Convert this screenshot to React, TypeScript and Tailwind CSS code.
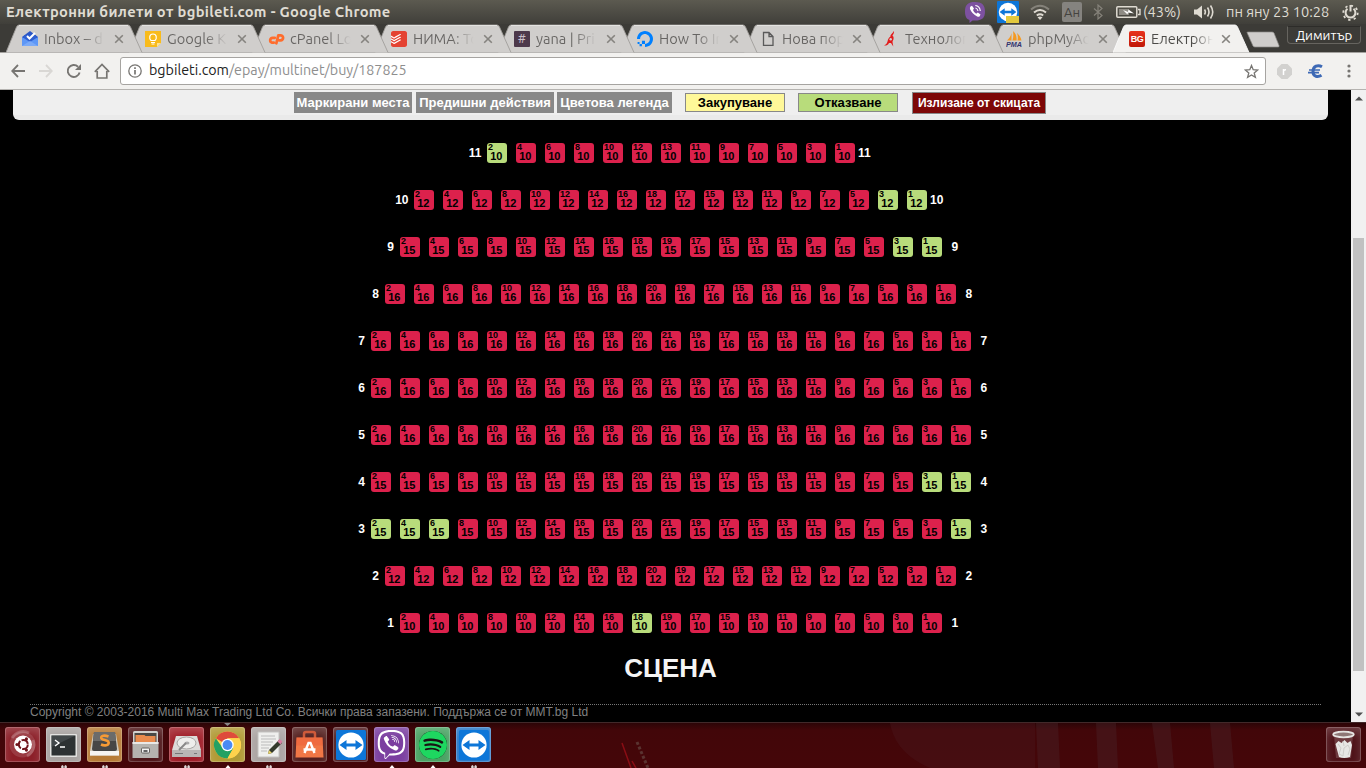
import React from "react";
import { SiTodoist, SiDigitalocean, SiViber, SiSpotify } from "react-icons/si";

const UI = "font-['Ubuntu','Open_Sans',sans-serif]";
const SANS = "font-['Liberation_Sans',Arial,sans-serif]";

/* ---------- seat map ---------- */

type Row = { n: number; count: number; price: number; pad: string; free: number[] };

const rows: Row[] = [
  { n: 11, count: 13, price: 10, pad: "pl-[457px]", free: [2] },
  { n: 10, count: 18, price: 12, pad: "pl-[384px]", free: [3, 1] },
  { n: 9, count: 19, price: 15, pad: "pl-[370px]", free: [3, 1] },
  { n: 8, count: 20, price: 16, pad: "pl-[355px]", free: [] },
  { n: 7, count: 21, price: 16, pad: "pl-[341px]", free: [] },
  { n: 6, count: 21, price: 16, pad: "pl-[341px]", free: [] },
  { n: 5, count: 21, price: 16, pad: "pl-[341px]", free: [] },
  { n: 4, count: 21, price: 15, pad: "pl-[341px]", free: [3, 1] },
  { n: 3, count: 21, price: 15, pad: "pl-[341px]", free: [2, 4, 6, 1] },
  { n: 2, count: 20, price: 12, pad: "pl-[355px]", free: [] },
  { n: 1, count: 19, price: 10, pad: "pl-[370px]", free: [18] },
];

function seatNumbers(count: number) {
  const evens: number[] = [];
  const odds: number[] = [];
  for (let i = 1; i <= count; i++) (i % 2 ? odds : evens).push(i);
  return [...evens, ...odds.reverse()];
}

function Seat({ n, price, free }: { n: number; price: number; free: boolean }) {
  return (
    <div
      className={`h-5 w-5 shrink-0 overflow-hidden rounded-[3px] font-bold text-black ${free ? "bg-[#b8dc7b]" : "bg-[#dc214c]"}`}
    >
      <div className="h-[9px] pl-px text-[9px] leading-[9px]">{n}</div>
      <div className="pr-[1.5px] text-center text-[11px] leading-[9px]">{price}</div>
    </div>
  );
}

function SeatRow({ row }: { row: Row }) {
  const wide = row.n > 9;
  return (
    <div className={`flex h-5 items-center text-[12px] font-bold text-white ${row.pad}`}>
      <div className={`w-[30px] text-right leading-5 ${wide ? "pr-[5.5px]" : "pr-[6px]"}`}>{row.n}</div>
      <div className="flex gap-[9px]">
        {seatNumbers(row.count).map((n) => (
          <Seat key={n} n={n} price={row.price} free={row.free.includes(n)} />
        ))}
      </div>
      <div className={`leading-5 ${wide ? "pl-[3px]" : "pl-[9.5px]"}`}>{row.n}</div>
    </div>
  );
}

/* ---------- tab icons ---------- */

const InboxIcon = () => (
  <svg width="16" height="16" viewBox="0 0 16 16">
    <path d="M0 6 8 0l8 6v4H0z" fill="#2a56c6" />
    <path d="M2 4h12v7H2z" fill="#2f5fd0" />
    <path d="M0 6l8 5 8-5v9H0z" fill="#5e97f6" />
    <path d="M0 15 8 10l8 5z" fill="#7baaf7" />
    <path d="m5 5 2.500 2.500L13 2" fill="none" stroke="#fff" strokeWidth="2" />
  </svg>
);
const KeepIcon = () => (
  <svg width="16" height="16" viewBox="0 0 16 16">
    <path d="M0 0h16v12l-4 4H0z" fill="#f9bb1b" />
    <path d="M16 12h-4v4z" fill="#fde293" />
    <path d="M6 9.500C4 8 4 3 8 3s4 5 2 6.500z" fill="none" stroke="#fff" strokeWidth="1.200" />
    <path d="M6 11.500h4M6.500 13h3" stroke="#fff" />
  </svg>
);
const CpanelIcon = () => (
  <svg width="17" height="16" viewBox="0 0 17 16" fill="none" stroke="#ff6c2c" strokeWidth="2.700" strokeLinecap="round" strokeLinejoin="round">
    <path d="M6.800 6.800H4.600a2.500 2.500 0 0 0-.6 4.900h1.800" />
    <path d="m8.300 12.300 2-8h2.200a2.500 2.500 0 0 1 .2 5h-1.800" />
  </svg>
);
const FileIcon = () => (
  <svg width="16" height="16" viewBox="0 0 16 16" fill="none" stroke="#5a5a5a" strokeWidth="1.300">
    <path d="M3.500 1.500h5.500l4 4v8.800h-9.500zM9 1.500v4h4" />
  </svg>
);
const FlameIcon = () => (
  <svg width="16" height="16" viewBox="0 0 16 16">
    <path d="M10.500 0c1.300 2-.6 3.200-1 5 1 .2 1.300 1.500 1 3-.2 1.300-1 2-1 3l.8 4.500-2.300-3.500H6C5 14 3 14.800 1 14.500c2-1 3-2 3.500-4C5 8.500 5.500 6.500 7.500 5.500 7 3.500 10 2.500 10.500 0z" fill="#e21b1b" />
    <circle cx="7.700" cy="8.300" r="1.200" fill="#d0cfcd" />
  </svg>
);
const PmaIcon = () => (
  <svg width="16" height="16" viewBox="0 0 16 16">
    <path d="M5.500 2v7.500H1C3 8 5 5 5.500 2zM7 0c3 2.500 4 6 3.500 9.500H6.500C7.500 6 7.500 3 7 0zM11 2c2.500 2 4 5 4.500 7.500h-4C12 7 12 4.500 11 2z" fill="#f59a23" />
    <text x="0" y="15.500" fontSize="6.500" fontWeight="bold" fontStyle="italic" fill="#34346e" textLength="16" lengthAdjust="spacingAndGlyphs" fontFamily="Liberation Sans">PMA</text>
  </svg>
);

const tabs: { title: string; icon: React.ReactNode }[] = [
  { title: "Inbox – d", icon: <InboxIcon /> },
  { title: "Google K", icon: <KeepIcon /> },
  { title: "cPanel Lo", icon: <CpanelIcon /> },
  { title: "НИМА: То", icon: <div className="h-4 w-4 rounded-[2px] bg-white"><SiTodoist size={16} color="#e44332" /></div> },
  { title: "yana | Pri", icon: <div className="h-4 w-4 rounded-[1px] bg-[#4d394b] text-center text-[12px] leading-4 text-[#c9bfc8]">#</div> },
  { title: "How To In", icon: <SiDigitalocean size={16} color="#0080ff" /> },
  { title: "Нова пор", icon: <FileIcon /> },
  { title: "Технолог", icon: <FlameIcon /> },
  { title: "phpMyAd", icon: <PmaIcon /> },
  { title: "Електрон", icon: <div className={`h-4 w-4 rounded-[2px] bg-gradient-to-b from-[#e8321c] to-[#c01808] text-center text-[9px] font-bold leading-4 tracking-[-0.5px] text-white ${SANS}`}>BG</div> },
];

function Tab({ title, icon, index }: { title: string; icon: React.ReactNode; index: number }) {
  const active = index === 9;
  return (
    <div className="relative flex h-[29px] w-[123px] shrink-0 items-center pl-[16px]" style={{ zIndex: active ? 20 : 10 - index }}>
      <svg className="absolute left-0 top-0" width="138" height="29" viewBox="0 0 138 29">
        <path d="M0 28.500 10.500 3Q11.500 1 13 1H122Q123.500 1 124.500 3L136 28.500z" fill={active ? "#f2f1ef" : "#d0cecc"} />
        <path d="M0 28.500 10.500 3Q11.500 1 13 1H122Q123.500 1 124.500 3L136 28.500" fill="none" stroke={active ? "#fafafa" : "#a09e9b"} strokeWidth=".9" />
        {!active && <path d="M13 1.500H122" stroke="#e4e3e1" />}
      </svg>
      <div className="relative flex h-4 w-[17px] items-center">{icon}</div>
      <div
        className={`relative ml-[5px] w-[62px] whitespace-nowrap bg-clip-text text-[14.6px] leading-5 text-transparent ${UI} ${
          active
            ? "bg-[linear-gradient(90deg,#4c4b48_68%,#f2f1ef_100%)]"
            : "bg-[linear-gradient(90deg,#666462_62%,#d0cecc_98%)]"
        }`}
      >
        {title}
      </div>
      <svg className="relative ml-[8px]" width="10" height="10" viewBox="0 0 10 10">
        <path d="m1.200 1.200 7.600 7.600m0-7.600L1.200 8.800" stroke="#85837f" strokeWidth="1.600" />
      </svg>
    </div>
  );
}

/* ---------- system tray ---------- */

function TeamViewer({ size }: { size: number }) {
  return (
    <svg width={size} height={size} viewBox="0 0 30 30">
      <rect width="30" height="30" rx="1.500" fill="#0d76d8" />
      <circle cx="15" cy="15" r="12.600" fill="#fff" />
      <path d="m3.500 15 7-5v3.400h9V10l7 5-7 5v-3.400h-9V20z" fill="#0d76d8" />
    </svg>
  );
}

function Tray() {
  return (
    <div className={`flex h-6 items-center text-[14.6px] text-[#dfdbd2] ${UI}`}>
      <svg width="20" height="21" viewBox="0 0 20 21">
        <path d="M10 0C3 0 0 2.500 0 9.500c0 5 1.500 7.500 4.500 8.500v3l3-2.500H10c7 0 10-2.500 10-9S17 0 10 0z" fill="#7d51a0" />
        <path d="M5.500 4.500 7 3.800l2 2.700-1 1.500q.8 2.500 3.200 3.700l1.600-1.200 2.700 2-.8 1.700q-1 1-2.500.3Q7 12 5 7q-.4-1.500.5-2.500z" fill="#fff" />
        <path d="M10.300 3.500q4.500.5 5 5.500M10.500 6q2 .5 2.500 3" fill="none" stroke="#fff" strokeWidth="1.100" />
      </svg>
      <div className="relative ml-[12px] h-[22px] w-[22px]">
        <TeamViewer size={22} />
        <div className="absolute bottom-0 right-0 h-[7px] w-[13px] bg-[#e3c93e]" />
      </div>
      <svg className="ml-[11px]" width="20" height="16" viewBox="0 0 20 16" fill="none" strokeWidth="2">
        <path d="M1 5.500Q10-2 19 5.500" stroke="#85827a" />
        <path d="M4 8.500Q10 3.500 16 8.500M6.800 11.500Q10 9 13.200 11.500" stroke="#dfdbd2" />
        <path d="m7.500 13.200 2.500 2.800 2.500-2.800Q10 12 7.500 13.200z" fill="#dfdbd2" stroke="none" />
      </svg>
      <div className="ml-[12px] h-5 w-5 rounded-[2px] bg-[#85837f] text-center text-[13px] leading-5 text-[#45433f]">Ан</div>
      <svg className="ml-[11px]" width="10" height="16" viewBox="0 0 10 16" fill="none" stroke="#85827a" strokeWidth="1.200">
        <path d="m1 4.500 8 7-4 3.500V1l4 3.500-8 7" />
      </svg>
      <svg className="ml-[13px]" width="25" height="12" viewBox="0 0 25 12">
        <rect x=".8" y=".8" width="20" height="10.400" rx="1" fill="none" stroke="#dfdbd2" strokeWidth="1.500" />
        <path d="M22 3.500h2v5h-2" fill="none" stroke="#dfdbd2" strokeWidth="1.400" />
        <path d="M3 3h10v6H3z" fill="#8e8b84" />
        <path d="m7 4 5 2 .5-2.500L18 7.500 12 6.500 11.500 8.500z" fill="#fff" />
      </svg>
      <div className="ml-[2px] w-[39px] whitespace-nowrap">(43%)</div>
      <svg className="ml-[12px]" width="21" height="16" viewBox="0 0 21 16" fill="none" stroke="#dfdbd2" strokeWidth="1.600">
        <path d="M0 5.500h3l5-4v13l-5-4H0z" fill="#dfdbd2" stroke="none" />
        <path d="M10.500 5.500q1.700 2.500 0 5M13.500 3.500q3 4.500 0 9M16.500 1.500q4.500 6.500 0 13" />
      </svg>
      <div className="ml-[11px] w-[104px] whitespace-nowrap">пн яну 23 10:28</div>
      <svg className="ml-[12px]" width="17" height="17" viewBox="0 0 17 17" fill="none" stroke="#dfdbd2">
        <path d="M5.500 4.800a4.900 4.900 0 1 0 6 0" strokeWidth="2" />
        <path d="M8.500 1v6.500" strokeWidth="2" />
        <circle cx="8.500" cy="8.800" r="7.200" strokeWidth="1.800" strokeDasharray="2.300 3.355" />
      </svg>
    </div>
  );
}

/* ---------- launcher icons ---------- */

const UbuntuLogo = () => (
  <svg width="35" height="35" viewBox="0 0 35 35">
    <circle cx="17.500" cy="17.500" r="13" fill="#fff" opacity=".12" />
    <path d="M7 11a13 13 0 0 1 17-5M28 13a13 13 0 0 1-6 16" stroke="#fff" opacity=".2" strokeWidth="3" fill="none" />
    <circle cx="18" cy="17.500" r="9" fill="#fff" />
    <circle cx="18.300" cy="17.500" r="4.500" fill="none" stroke="#70141c" strokeWidth="2" strokeDasharray="8.100 1.325" />
    <circle cx="12" cy="17.500" r="1.600" fill="#70141c" />
    <circle cx="21.400" cy="11.900" r="1.600" fill="#70141c" />
    <circle cx="21.400" cy="23.100" r="1.600" fill="#70141c" />
  </svg>
);
const Terminal = () => (
  <svg width="35" height="35" viewBox="0 0 35 35">
    <rect x="4" y="7" width="27" height="23" rx="1" fill="#e2e2e0" />
    <rect x="5.500" y="8.500" width="24" height="20" fill="#2d3233" />
    <path d="M5.500 8.500h24L5.500 20z" fill="#50575a" opacity=".6" />
    <path d="m9 13 4 3-4 3M14 20h5" fill="none" stroke="#fff" strokeWidth="1.400" />
  </svg>
);
const Sublime = () => (
  <svg width="35" height="35" viewBox="0 0 35 35">
    <path d="M6 7h23l3 17v4.500H3V24z" fill="#cfc8bb" />
    <path d="M3 24h29v4.500H3z" fill="#f6f4f1" />
    <path d="M7 5h21l2 17q0 2-2 2H7q-2 0-2-2z" fill="#464646" />
    <path d="M7 5h21l1 9H6z" fill="#6b6b6a" />
    <path d="M21.500 9.500c-4-1.500-7.500-1-7.200 1.500.4 2.500 7.400 1.700 7.400 4.700 0 2.500-4 3.500-7.700 1.800" fill="none" stroke="#f59a35" strokeWidth="2.600" />
  </svg>
);
const Drawer = () => (
  <svg width="35" height="35" viewBox="0 0 35 35">
    <rect x="5" y="4" width="25" height="27" rx="1.500" fill="#d2d0cd" />
    <rect x="6.500" y="6" width="22" height="9" fill="#4a4845" />
    <path d="M7.500 8h9l1 1h10v6h-20z" fill="#e98a4d" />
    <path d="M4.500 15h26v16h-26z" fill="#b5b3af" />
    <path d="M4.500 15h26v2h-26z" fill="#e9e8e6" />
    <rect x="13.500" y="21" width="8" height="5" rx="1" fill="#f2f2f2" stroke="#65625f" />
    <path d="M15.500 24h4" stroke="#333" strokeWidth="1.500" />
  </svg>
);
const Disk = () => (
  <svg width="35" height="35" viewBox="0 0 35 35">
    <path d="M7 9h21l4 14v7H3v-7z" fill="#dddcda" />
    <path d="M3 23h29v7H3z" fill="#b9b7b4" />
    <ellipse cx="17.500" cy="16" rx="9.500" ry="6" fill="#eeeeec" stroke="#a7a5a3" />
    <ellipse cx="18" cy="16" rx="2.500" ry="1.500" fill="#aaa" />
    <path d="m10 23 7-7" stroke="#888" strokeWidth="2" />
    <path d="M6 26.500h8M25 26.500h3" stroke="#777" />
  </svg>
);
const Chrome = () => (
  <svg width="35" height="35" viewBox="0 0 35 35">
    <circle cx="17.500" cy="18" r="13.500" fill="#ffd24c" />
    <path d="M17.500 18 5.800 11.250A13.500 13.500 0 0 1 29.200 11.250H17.500z" fill="#de4b3b" />
    <path d="M5.800 11.250A13.500 13.500 0 0 0 17.500 31.500L23.300 21 17.500 18 12 20z" fill="#22a163" />
    <path d="M29.200 11.250H17.500L23.300 21.400 17.500 31.500A13.500 13.500 0 0 0 29.200 11.250z" fill="#ffd24c" />
    <circle cx="17.500" cy="18" r="6.200" fill="#fff" />
    <circle cx="17.500" cy="18" r="4.900" fill="#4a8af4" />
  </svg>
);
const Editor = () => (
  <svg width="35" height="35" viewBox="0 0 35 35">
    <path d="M7 5h21v25H7z" fill="#efefed" stroke="#c3c2c0" />
    <path d="M10 9h14M10 12h15M10 15h12M10 18h10M10 21h8M10 24h6" stroke="#bbb" />
    <path d="m17 27 1-4L28 13l3 3-10 10z" fill="#343a2c" />
    <path d="m17 27 1-4 3 3z" fill="#e9d36b" />
    <path d="m26.500 14.500 2-2.500 3 2.500-2 3z" fill="#d77fa1" />
  </svg>
);
const Store = () => (
  <svg width="35" height="35" viewBox="0 0 35 35">
    <path d="M12 12V7q0-2 2-2h7q2 0 2 2v5" fill="none" stroke="#cf5a3a" strokeWidth="2.500" />
    <path d="M4.500 10.500h26l1 20h-28z" fill="#f07746" />
    <path d="M4.500 10.500h26l.3 8H4z" fill="#ee5f3a" opacity=".5" />
    <path d="m12.500 26 4-10h2l4 10M11.500 22.500h12" fill="none" stroke="#fff" strokeWidth="2.400" />
  </svg>
);
const Trash = () => (
  <svg width="35" height="35" viewBox="0 0 35 35">
    <path d="M8 8h19l-2 23H10z" fill="#d9c9c9" opacity=".22" />
    <path d="m9.500 17 3-3 3 2 3-3 3 3 3-2 1.500 4-2 12q-6 2-11 0z" fill="#e7e6e4" />
    <path d="m12 17 3 4-2 6 4 2 1-8 4-3 2 4-2 6M17 14l1 5" stroke="#cfcdca" fill="none" />
    <ellipse cx="17.500" cy="7.500" rx="10.300" ry="2.800" fill="#8e7776" stroke="#e5e3e1" strokeWidth="1.800" />
  </svg>
);

const launcher: { bg: string; icon: React.ReactNode; mark?: string }[] = [
  { bg: "bg-[#8c1f28]", icon: <UbuntuLogo /> },
  { bg: "bg-[#a8a3a1]", icon: <Terminal />, mark: "double" },
  { bg: "bg-[#b77b36]", icon: <Sublime />, mark: "double" },
  { bg: "bg-[#4f171a]", icon: <Drawer /> },
  { bg: "bg-[#a01f29]", icon: <Disk />, mark: "double" },
  { bg: "bg-[#b19a35]", icon: <Chrome />, mark: "single" },
  { bg: "bg-[#aca5a3]", icon: <Editor />, mark: "double" },
  { bg: "bg-[#54201f]", icon: <Store /> },
  { bg: "bg-[#4f1c20]", icon: <TeamViewer size={30} /> },
  { bg: "bg-[#7b3fa0]", icon: <SiViber size={29} color="#fff" />, mark: "single" },
  { bg: "bg-[#4aa263]", icon: <div className="rounded-full bg-[#191414]"><SiSpotify size={28} color="#1ed760" /></div>, mark: "single" },
  { bg: "bg-[#2878c8]", icon: <TeamViewer size={30} />, mark: "double" },
];

function Tile({ bg, icon, mark }: { bg: string; icon: React.ReactNode; mark?: string }) {
  return (
    <div className="flex h-[41px] w-[35px] shrink-0 flex-col items-center">
      <div className={`flex h-[35px] w-[35px] items-center justify-center overflow-hidden rounded-[3px] shadow-[inset_0_0_0_1px_rgba(255,255,255,0.2),inset_0_5px_9px_rgba(255,255,255,0.2)] ${bg}`}>
        {icon}
      </div>
      {mark && (
        <svg className="mt-[3px]" width="8" height="3" viewBox="0 0 8 3">
          {mark === "double" ? <path d="M1.200 3V1l1.200-1 1.200 1v2zM4.400 3V1l1.200-1 1.200 1v2z" fill="#ddd8d8" /> : <path d="m1.500 3 2.500-3 2.500 3z" fill="#fff" />}
        </svg>
      )}
    </div>
  );
}

export default function App() {
  return (
    <div className="flex h-[768px] w-[1366px] flex-col overflow-hidden bg-black">
      {/* menu bar */}
      <div className="flex h-6 shrink-0 items-center bg-gradient-to-b from-[#5c5a50] to-[#403f3a] pl-[6px]">
        <div className={`w-[959px] whitespace-nowrap text-[14.7px] font-bold tracking-[0.33px] text-[#dfdbd2] ${UI}`}>
          Електронни билети от bgbileti.com - Google Chrome
        </div>
        <Tray />
      </div>

      {/* tab strip */}
      <div className="flex h-[29px] shrink-0 border-b border-[#a3a19e] bg-[#3c3b37] pl-[6px]">
        {tabs.map((t, i) => (
          <Tab key={i} index={i} {...t} />
        ))}
        <svg className="ml-[10px] mt-[7px] shrink-0" width="34" height="17" viewBox="0 0 34 17">
          <path d="M1 1.500Q1 1 2 1H26q1.500 0 2 1l5 12.500q.5 1.500-1 1.500H9q-1.500 0-2-1z" fill="#cfcdcb" stroke="#8b8986" strokeWidth=".7" />
        </svg>
        <div className={`ml-[7px] mt-[2px] h-[18px] w-[74px] shrink-0 whitespace-nowrap rounded-b-[4px] border border-t-[#2d2c29] border-x-[#66645f] border-b-[#66645f] text-center text-[13.3px] leading-[17px] text-white ${UI}`}>
          Димитър
        </div>
      </div>

      {/* toolbar */}
      <div className="flex h-[37px] shrink-0 items-center border-b border-[#b5b3b0] bg-[#f2f1ef] pl-[11px]">
        <svg width="14" height="14" viewBox="0 0 14 14" fill="none" stroke="#777572" strokeWidth="1.800"><path d="M14 7H1.500M7 1 1.200 7 7 13" /></svg>
        <svg className="ml-[14px]" width="14" height="14" viewBox="0 0 14 14" fill="none" stroke="#d9d7d4" strokeWidth="1.800"><path d="M0 7h12.500M7 1l5.800 6L7 13" /></svg>
        <svg className="ml-[14px]" width="14" height="14" viewBox="0 0 14 14"><path d="M12.600 8.500A6 6 0 1 1 11 2.700" fill="none" stroke="#777572" strokeWidth="1.900" /><path d="M14 0v6H8z" fill="#777572" /></svg>
        <svg className="ml-[13px]" width="16" height="16" viewBox="0 0 16 16" fill="none" stroke="#777572" strokeWidth="1.700"><path d="M.8 8.800 8 1.500l7.200 7.300M3.200 8v7h9.600V8" /></svg>
        <div className="ml-[10px] flex h-7 w-[1146px] items-center rounded-[3px] border border-[#a6a4a1] bg-white pl-[7px] pr-[6px]">
          <svg width="14" height="14" viewBox="0 0 14 14" fill="none" stroke="#777572"><circle cx="7" cy="7" r="6.200" strokeWidth="1.300" /><path d="M7 6v4.500M7 3.300V5" strokeWidth="1.700" /></svg>
          <div className={`ml-[7px] grow whitespace-nowrap text-[14.3px] text-[#8e8e8e] ${UI}`}>
            <span className="text-[#222]">bgbileti.com</span>/epay/multinet/buy/187825
          </div>
          <svg width="15" height="15" viewBox="0 0 15 15"><path d="m7.500 1.500 1.700 4.200 4.500.3-3.500 2.900 1.200 4.500-3.900-2.500-3.900 2.500 1.200-4.500L1.300 6l4.500-.3z" fill="none" stroke="#777572" strokeWidth="1.300" /></svg>
        </div>
        <svg className="ml-[11px]" width="15" height="15" viewBox="0 0 15 15"><path d="M4.500 0h6L15 4.500v6L10.500 15h-6L0 10.500v-6z" fill="#d2d1cf" /><path d="M6.500 11V5M6.500 7q.8-1.500 2.500-1.300" stroke="#fff" strokeWidth="1.500" fill="none" /></svg>
        <svg className="ml-[16px]" width="16" height="15" viewBox="0 0 16 15" fill="none" stroke="#3d69b5"><path d="M14 2.800C10 .5 5 2 5 7.500s5 6 8.500 3.800" strokeWidth="3" /><path d="M1 6h11M0 8.700h11" strokeWidth="1.700" /></svg>
        <svg className="ml-[23px]" width="4" height="14" viewBox="0 0 4 14" fill="#777572"><circle cx="2" cy="2" r="1.600" /><circle cx="2" cy="7" r="1.600" /><circle cx="2" cy="12" r="1.600" /></svg>
      </div>

      {/* page */}
      <div className="flex h-[632px] shrink-0">
        <div className={`flex w-[1351px] flex-col bg-black ${SANS}`}>
          <div className="ml-[13px] flex h-[30px] w-[1315px] shrink-0 items-start whitespace-nowrap rounded-b-[6px] bg-[linear-gradient(#efefef_25px,#eaeaea_25px)] pl-[281px] pt-[2px] text-center text-[13px] font-bold leading-[21px] text-white">
            <div className="h-[21px] w-[118px] bg-[#888]">Маркирани места</div>
            <div className="ml-1 h-[21px] w-[138px] bg-[#888]">Предишни действия</div>
            <div className="ml-[3px] h-[21px] w-[115px] bg-[#888]">Цветова легенда</div>
            <div className="ml-[13px] mt-px h-[19px] w-[100px] border border-[#888] bg-[#fff899] leading-[18px] text-black">Закупуване</div>
            <div className="ml-[13px] mt-px h-[19px] w-[100px] border border-[#888] bg-[#b8dc7b] leading-[18px] text-black">Отказване</div>
            <div className="ml-[14px] h-[22px] w-[134px] border border-[#888] bg-[#7d0707] text-[12px] leading-[20px]">Излизане от скицата</div>
          </div>
          <div className="flex flex-col gap-[27px] pt-[23px]">
            {rows.map((r) => (
              <SeatRow key={r.n} row={r} />
            ))}
          </div>
          <div className="mt-[20px] h-[30px] pr-[10px] text-center text-[26px] font-bold leading-[30px] text-[#f4f4f4]">СЦЕНА</div>
          <div className="ml-[30px] mt-[21px] w-[1291px] border-t border-dotted border-[#777] text-[12px] leading-[15px] text-[#808080]">
            Copyright © 2003-2016 Multi Max Trading Ltd Co. Всички права запазени. Поддържа се от MMT.bg Ltd
          </div>
        </div>
        <div className="flex w-[15px] flex-col items-center bg-[#f1f1f1]">
          <svg className="mt-[6px]" width="8" height="5" viewBox="0 0 8 5"><path d="m0 4.500 4-4 4 4z" fill="#4e4e4e" /></svg>
          <div className="mt-[137px] h-[433px] w-[11px] bg-[#c1c1c1]" />
          <svg className="mt-[41px]" width="8" height="5" viewBox="0 0 8 5"><path d="m0 .5 4 4 4-4z" fill="#4e4e4e" /></svg>
        </div>
      </div>

      {/* launcher */}
      <div className="relative flex h-[46px] shrink-0 gap-[6px] border-t border-[#42292a] bg-[linear-gradient(180deg,#2c0507_0,#420609_7px,#450609_100%)] pl-[5px] pt-1">
        <svg className="absolute left-0 top-0" width="1366" height="45" viewBox="0 0 1366 45">
          <path d="M890 0h145v45H930Q895 30 890 0z" fill="#4a171c" opacity=".45" />
          <path d="M1036 0h22l2 45h-22zM1096 0h20l2 45h-20zM1152 0h18l4 45h-16zM1210 0h20l4 45h-20z" fill="#4b2c31" opacity=".35" />
          <path d="m622 20 9 25M632 38l4 7" stroke="#a8101a" strokeWidth="1.500" opacity=".7" />
          <path d="m637 19 11 26" stroke="#69514b" strokeWidth="3" strokeDasharray="3 2" opacity=".6" />
          <path d="M224 0h7l-3.500 3z" fill="#888" />
        </svg>
        {launcher.map((l, i) => (
          <div key={i} className="relative">
            <Tile {...l} />
          </div>
        ))}
        <div className="relative ml-auto pr-[5px]">
          <Tile bg="bg-[#4f1319]" icon={<Trash />} />
        </div>
      </div>
    </div>
  );
}
